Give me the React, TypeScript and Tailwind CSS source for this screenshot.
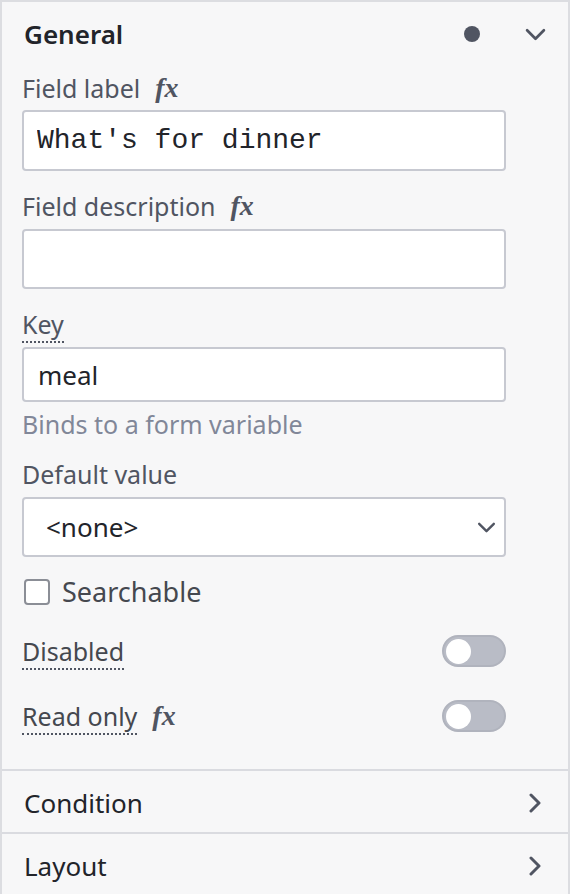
import { useState } from 'react';

const sans = "font-['Noto_Sans',sans-serif]";

function FxIcon() {
  return (
    <span className="ml-[15px] font-['Liberation_Serif',serif] text-[28px] leading-[32px] font-bold italic text-[#505562]">
      fx
    </span>
  );
}

function ChevronDown({ className }: { className?: string }) {
  return (
    <svg viewBox="0 0 20 12" className={className} fill="none" stroke="currentColor" strokeWidth={2.6} strokeLinecap="round" strokeLinejoin="round">
      <path d="M2 2l8 8 8-8" />
    </svg>
  );
}

function ChevronRight() {
  return (
    <svg viewBox="0 0 14 20" className="h-[20px] w-[14px] text-[#505562]" fill="none" stroke="currentColor" strokeWidth={3} strokeLinecap="round" strokeLinejoin="round">
      <path d="M3 2l8 8-8 8" />
    </svg>
  );
}

function Toggle({ checked, onChange }: { checked: boolean; onChange: (v: boolean) => void }) {
  return (
    <button
      type="button"
      onClick={() => onChange(!checked)}
      className={`flex h-[32px] w-[64px] items-center rounded-full border-2 border-[#b0b3bd] px-[2px] ${checked ? 'justify-end bg-[#4d8af0]' : 'justify-start bg-[#b9bcc6]'}`}
    >
      <span className="h-[25px] w-[25px] rounded-full bg-white" />
    </button>
  );
}

function Label({ children, dotted }: { children: React.ReactNode; dotted?: boolean }) {
  return (
    <span className={`text-[25px] leading-[32px] text-[#505562] ${dotted ? 'border-b-2 border-dotted border-[#505562]' : ''}`}>
      {children}
    </span>
  );
}

function CollapsedGroup({ title }: { title: string }) {
  return (
    <div className="flex h-[63px] items-center justify-between border-t-2 border-[#dadbe0] pl-[22px] pr-[26px] pt-[3px]">
      <span className="text-[26px] leading-[32px] text-[#22242a]">{title}</span>
      <ChevronRight />
    </div>
  );
}

export default function App() {
  const [label, setLabel] = useState("What's for dinner");
  const [description, setDescription] = useState('');
  const [key, setKey] = useState('meal');
  const [searchable, setSearchable] = useState(false);
  const [disabled, setDisabled] = useState(false);
  const [readOnly, setReadOnly] = useState(false);

  return (
    <div className={`${sans} h-[894px] w-[570px] overflow-hidden border-l-2 border-t-2 border-r-2 border-[#dcdde1] bg-[#f7f7f8]`}>
      <div className="flex h-[64px] items-center pl-[22px] pr-[22px]">
        <span className="flex-1 text-[26px] leading-[32px] font-semibold text-[#22242a]">General</span>
        <span className="mr-[45px] h-[16px] w-[16px] rounded-full bg-[#505562]" />
        <ChevronDown className="h-[13px] w-[21px] text-[#505562]" />
      </div>

      <div className="pl-[20px] pr-[62px] pb-[37px] pt-[6px]">
        <div className="flex items-center">
          <Label>Field label</Label>
          <FxIcon />
        </div>
        <input
          value={label}
          onChange={(e) => setLabel(e.target.value)}
          className="mt-[6px] block h-[61px] w-full rounded-[4px] border-2 border-[#c7c9d1] bg-white px-[13px] font-['Liberation_Mono',monospace] text-[28px] text-[#22242a] outline-none"
        />

        <div className="mt-[19px] flex items-center">
          <Label>Field description</Label>
          <FxIcon />
        </div>
        <input
          value={description}
          onChange={(e) => setDescription(e.target.value)}
          className="mt-[7px] block h-[60px] w-full rounded-[4px] border-2 border-[#c7c9d1] bg-white px-[13px] font-['Liberation_Mono',monospace] text-[28px] text-[#22242a] outline-none"
        />

        <div className="mt-[19px]">
          <Label dotted>Key</Label>
        </div>
        <input
          value={key}
          onChange={(e) => setKey(e.target.value)}
          className="mt-[7px] block h-[55px] w-full rounded-[4px] border-2 border-[#c7c9d1] bg-white px-[14px] text-[26px] text-[#22242a] outline-none"
        />
        <p className="mt-[6px] text-[25px] leading-[32px] text-[#818798]">Binds to a form variable</p>

        <div className="mt-[18px]">
          <Label>Default value</Label>
        </div>
        <div className="mt-[7px] flex h-[60px] w-full items-center rounded-[4px] border-2 border-[#c7c9d1] bg-white pl-[22px] pr-[8px]">
          <span className="flex-1 text-[26px] leading-[32px] text-[#22242a]">&lt;none&gt;</span>
          <ChevronDown className="h-[11px] w-[19px] text-[#505562]" />
        </div>

        <label className="mt-[19px] flex items-center">
          <input
            type="checkbox"
            checked={searchable}
            onChange={(e) => setSearchable(e.target.checked)}
            className="ml-[2px] h-[26px] w-[26px] appearance-none rounded-[4px] border-2 border-[#8b8e96] bg-white checked:bg-[#505562]"
          />
          <span className="ml-[12px] text-[27px] leading-[32px] text-[#45484f]">Searchable</span>
        </label>

        <div className="mt-[27px] flex items-center justify-between">
          <span className="text-[25px] leading-[32px] text-[#45484f]">
            <span className="border-b-2 border-dotted border-[#505562]">Disabled</span>
          </span>
          <Toggle checked={disabled} onChange={setDisabled} />
        </div>

        <div className="mt-[33px] flex items-center justify-between">
          <div className="flex items-center">
            <span className="text-[25px] leading-[32px] text-[#45484f]">
              <span className="border-b-2 border-dotted border-[#505562]">Read only</span>
            </span>
            <FxIcon />
          </div>
          <Toggle checked={readOnly} onChange={setReadOnly} />
        </div>
      </div>

      <CollapsedGroup title="Condition" />
      <CollapsedGroup title="Layout" />
    </div>
  );
}
